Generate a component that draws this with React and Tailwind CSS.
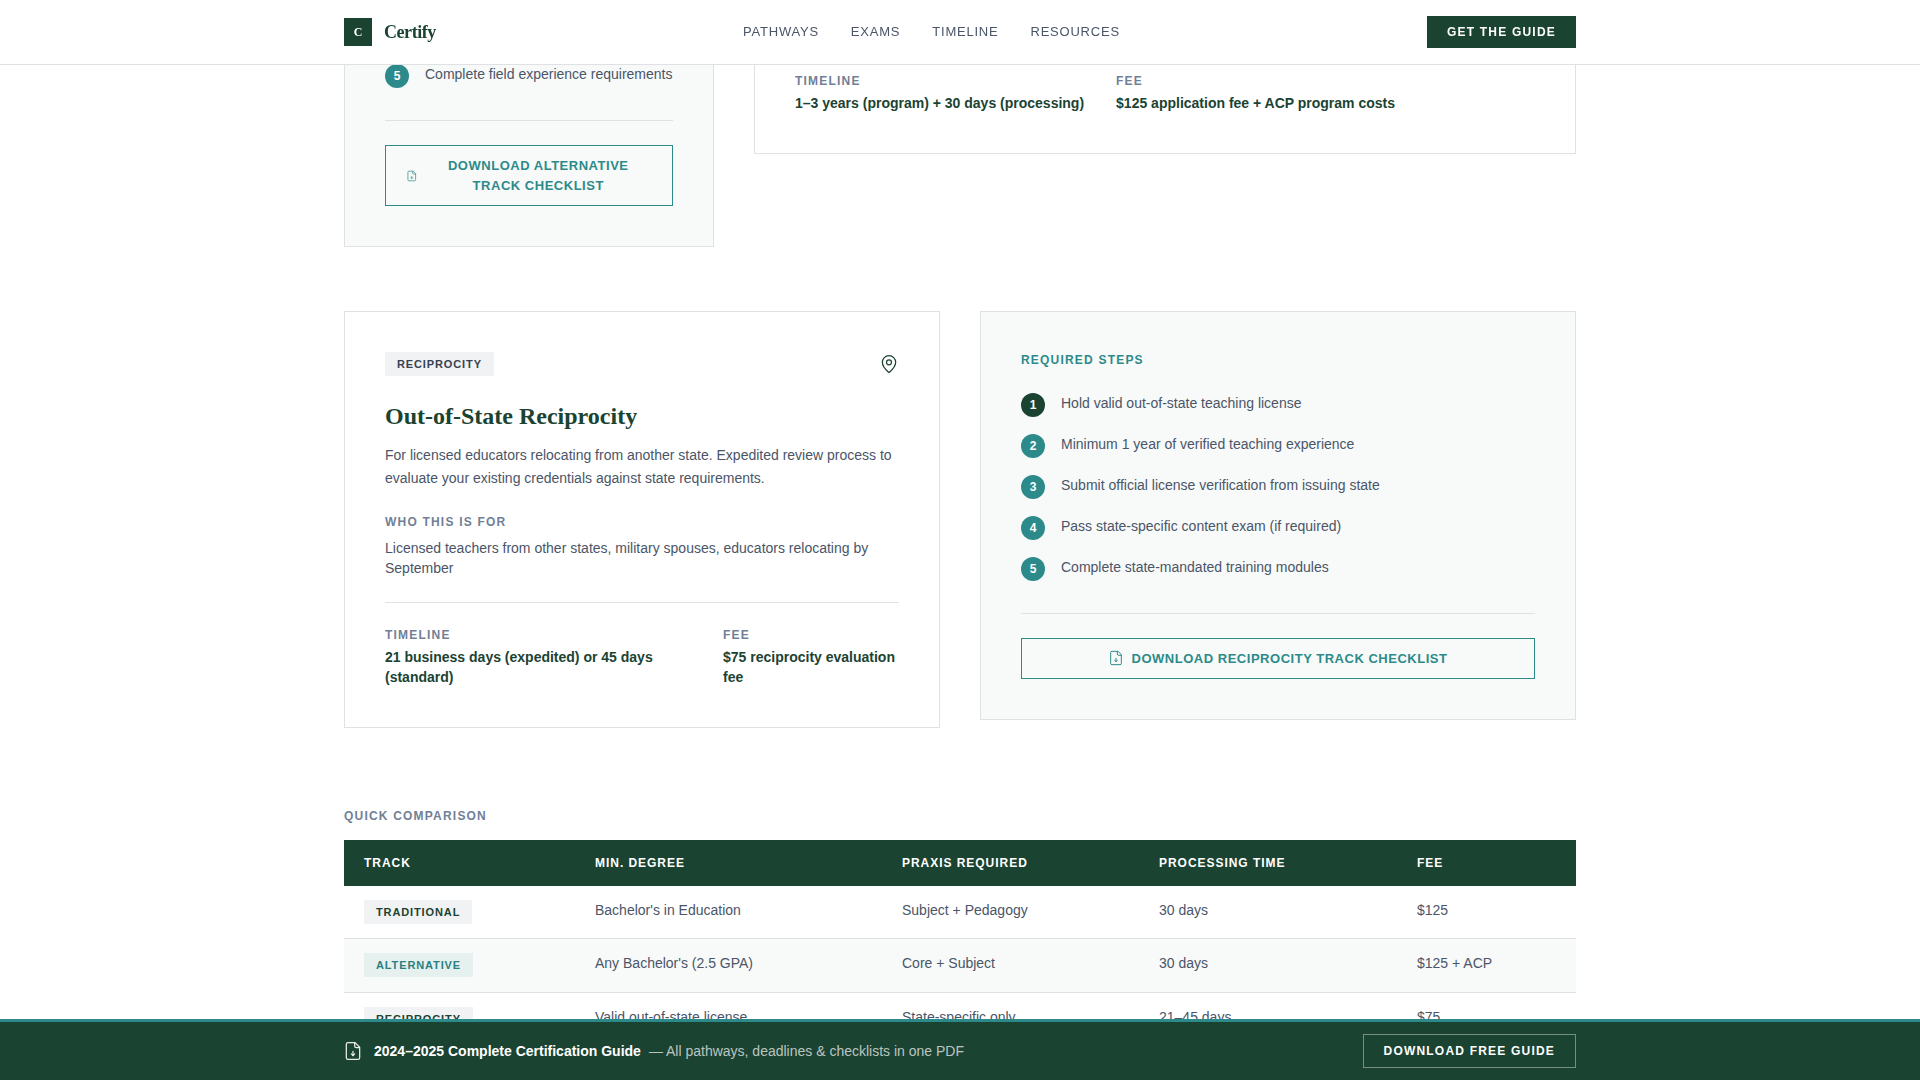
import React from 'react';
import { MapPin } from 'lucide-react';

const NAV_LINKS = ['PATHWAYS', 'EXAMS', 'TIMELINE', 'RESOURCES'];

const RECIPROCITY_STEPS = [
    'Hold valid out-of-state teaching license',
    'Minimum 1 year of verified teaching experience',
    'Submit official license verification from issuing state',
    'Pass state-specific content exam (if required)',
    'Complete state-mandated training modules',
];

const TRADITIONAL = 'bg-[#f1f2f3] text-[#1b4332]';
const ALTERNATIVE = 'bg-[#e6f0ee] text-[#2a8080]';

const ROWS = [
    { track: 'TRADITIONAL', badge: TRADITIONAL, degree: "Bachelor's in Education", praxis: 'Subject + Pedagogy', time: '30 days', fee: '$125' },
    { track: 'ALTERNATIVE', badge: ALTERNATIVE, degree: "Any Bachelor's (2.5 GPA)", praxis: 'Core + Subject', time: '30 days', fee: '$125 + ACP' },
    { track: 'RECIPROCITY', badge: TRADITIONAL, degree: 'Valid out-of-state license', praxis: 'State-specific only', time: '21–45 days', fee: '$75' },
];

const GuideIcon = ({ size, className = '' }) => (
    <svg width={size} height={size} viewBox="0 0 24 24" fill="none" stroke="currentColor" strokeWidth="1.5" strokeLinecap="round" strokeLinejoin="round" className={className}>
        <path d="M14.5 2H6a2 2 0 0 0-2 2v16a2 2 0 0 0 2 2h12a2 2 0 0 0 2-2V7.5z" />
        <path d="M14 2.5V6a2 2 0 0 0 2 2h3.5" />
        <path d="M12 12.5v5" />
        <path d="m10 15.5 2 2 2-2" />
    </svg>
);

const Step = ({ number, text, first }) => (
    <li className="flex items-start gap-4">
        <span className={`flex h-6 w-6 shrink-0 items-center justify-center rounded-full text-xs font-bold text-white ${first ? 'bg-[#1b4332]' : 'bg-[#2d8a8a]'}`}>
            {number}
        </span>
        <span className="text-sm text-[#4a5568]">{text}</span>
    </li>
);

const Meta = ({ label, value, className = '' }) => (
    <div className={className}>
        <p className="text-xs font-bold tracking-[0.1em] text-[#718096]">{label}</p>
        <p className="mt-1 text-sm font-bold text-[#1b4332]">{value}</p>
    </div>
);

const ChecklistButton = ({ children }) => (
    <button className="flex w-full items-center justify-center gap-[7px] border border-[#2d8a8a] px-5 pt-[10px] pb-[9.5px] text-[13px] leading-[19.5px] font-bold tracking-[0.04em] text-[#2d8a8a]">
        <GuideIcon size={16} className="shrink" />
        <span>{children}</span>
    </button>
);

const App = () => {
    return (
        <div className="relative h-screen overflow-hidden bg-white font-['Liberation_Sans',Arial,sans-serif]">
            {/* Header */}
            <header className="absolute inset-x-0 top-0 z-10 border-b border-[#dfe1e4] bg-white/95 backdrop-blur-sm">
                <div className="mx-auto flex h-16 max-w-[1280px] items-center justify-between px-6">
                    <div className="flex items-center gap-3">
                        <div className="flex h-7 w-7 items-center justify-center bg-[#1b4332] font-['Liberation_Serif',serif] text-xs font-bold text-white">C</div>
                        <span className="font-['Liberation_Serif',serif] text-lg font-bold tracking-tight text-[#1b4332]">Certify</span>
                    </div>
                    <nav className="flex items-center gap-8">
                        {NAV_LINKS.map((link) => (
                            <a key={link} className="text-[13px] tracking-[0.06em] text-[#4a5568]">{link}</a>
                        ))}
                    </nav>
                    <button className="h-8 bg-[#1b4332] px-5 text-xs font-bold tracking-[0.1em] text-white">GET THE GUIDE</button>
                </div>
            </header>

            <main className="mx-auto max-w-[1280px] px-6">
                {/* Alternative track, scrolled mostly under the header */}
                <section className="mb-16 grid grid-cols-[370px_1fr] items-start gap-10">
                    <div className="border-x border-b border-[#dfe1e4] bg-[#f8faf9] px-10 pt-[64px] pb-10">
                        <ul>
                            <Step number={5} text="Complete field experience requirements" />
                        </ul>
                        <div className="mt-8 mb-6 border-t border-[#dfe1e4]"></div>
                        <ChecklistButton>DOWNLOAD ALTERNATIVE TRACK CHECKLIST</ChecklistButton>
                    </div>
                    <div className="border-x border-b border-[#dfe1e4] px-10 pt-[73px] pb-10">
                        <div className="flex gap-8">
                            <Meta label="TIMELINE" value="1–3 years (program) + 30 days (processing)" />
                            <Meta label="FEE" value="$125 application fee + ACP program costs" />
                        </div>
                    </div>
                </section>

                {/* Reciprocity track */}
                <section className="mb-20 grid grid-cols-2 items-start gap-10">
                    <div className="border border-[#dfe1e4] p-10">
                        <div className="flex items-center justify-between">
                            <span className="bg-[#f1f2f3] px-3 py-1 text-[11px] leading-4 font-bold tracking-[0.08em] text-[#374151]">RECIPROCITY</span>
                            <MapPin size={20} strokeWidth={1.5} className="text-[#1b4332]" />
                        </div>
                        <h2 className="mt-6 font-['Liberation_Serif',serif] text-2xl font-bold text-[#1b4332]">Out-of-State Reciprocity</h2>
                        <p className="mt-3 text-sm leading-[23px] text-[#4a5568]">
                            For licensed educators relocating from another state. Expedited review process to evaluate your existing credentials against state requirements.
                        </p>
                        <p className="mt-6 text-xs font-bold tracking-[0.1em] text-[#718096]">WHO THIS IS FOR</p>
                        <p className="mt-2 text-sm text-[#4a5568]">
                            Licensed teachers from other states, military spouses, educators relocating by September
                        </p>
                        <div className="mt-6 flex gap-8 border-t border-[#dfe1e4] pt-6">
                            <Meta className="w-[306px]" label="TIMELINE" value="21 business days (expedited) or 45 days (standard)" />
                            <Meta className="w-[176px]" label="FEE" value="$75 reciprocity evaluation fee" />
                        </div>
                    </div>
                    <div className="border border-[#dfe1e4] bg-[#f8faf9] p-10">
                        <p className="text-xs font-bold tracking-[0.1em] text-[#2d8a8a]">REQUIRED STEPS</p>
                        <ul className="mt-[25px] flex flex-col gap-[17px]">
                            {RECIPROCITY_STEPS.map((text, index) => (
                                <Step key={text} number={index + 1} text={text} first={index === 0} />
                            ))}
                        </ul>
                        <div className="mt-8 mb-6 border-t border-[#dfe1e4]"></div>
                        <ChecklistButton>DOWNLOAD RECIPROCITY TRACK CHECKLIST</ChecklistButton>
                    </div>
                </section>

                {/* Comparison table */}
                <section>
                    <p className="mb-4 text-xs font-bold tracking-[0.1em] text-[#718096]">QUICK COMPARISON</p>
                    <table className="w-full table-fixed border-collapse text-left">
                        <thead className="bg-[#1b4332] text-xs font-bold tracking-[0.08em] text-white">
                            <tr>
                                <th className="w-[231px] px-5 py-[15px] font-bold">TRACK</th>
                                <th className="w-[307px] px-5 py-[15px] font-bold">MIN. DEGREE</th>
                                <th className="w-[257px] px-5 py-[15px] font-bold">PRAXIS REQUIRED</th>
                                <th className="w-[258px] px-5 py-[15px] font-bold">PROCESSING TIME</th>
                                <th className="px-5 py-[15px] font-bold">FEE</th>
                            </tr>
                        </thead>
                        <tbody className="text-sm text-[#4a5568]">
                            {ROWS.map((row, index) => (
                                <tr key={row.track} className={`border-b border-[#dfe1e4] ${index === 1 ? 'bg-[#f8faf9]' : ''}`}>
                                    <td className="px-5 py-[14.25px] align-top">
                                        <span className={`inline-block px-3 py-1 text-[11px] leading-4 font-bold tracking-[0.08em] ${row.badge}`}>{row.track}</span>
                                    </td>
                                    <td className="px-5 py-[14.25px] align-top">{row.degree}</td>
                                    <td className="px-5 py-[14.25px] align-top">{row.praxis}</td>
                                    <td className="px-5 py-[14.25px] align-top">{row.time}</td>
                                    <td className="px-5 py-[14.25px] align-top">{row.fee}</td>
                                </tr>
                            ))}
                        </tbody>
                    </table>
                </section>
            </main>

            {/* Guide bar */}
            <div className="absolute inset-x-0 bottom-0 z-10 border-t-[3px] border-[#2d8a8a] bg-[#1b4332]">
                <div className="mx-auto flex h-[58px] max-w-[1280px] items-center justify-between px-6">
                    <div className="flex items-center">
                        <GuideIcon size={20} className="-ml-px text-white/90" />
                        <span className="ml-[11px] text-sm font-bold text-white">2024–2025 Complete Certification Guide</span>
                        <span className="ml-2 text-sm text-white/70">— All pathways, deadlines &amp; checklists in one PDF</span>
                    </div>
                    <button className="h-[34px] border border-white/40 px-5 text-xs font-bold tracking-[0.1em] text-white">DOWNLOAD FREE GUIDE</button>
                </div>
            </div>
        </div>
    );
};

export default App;
